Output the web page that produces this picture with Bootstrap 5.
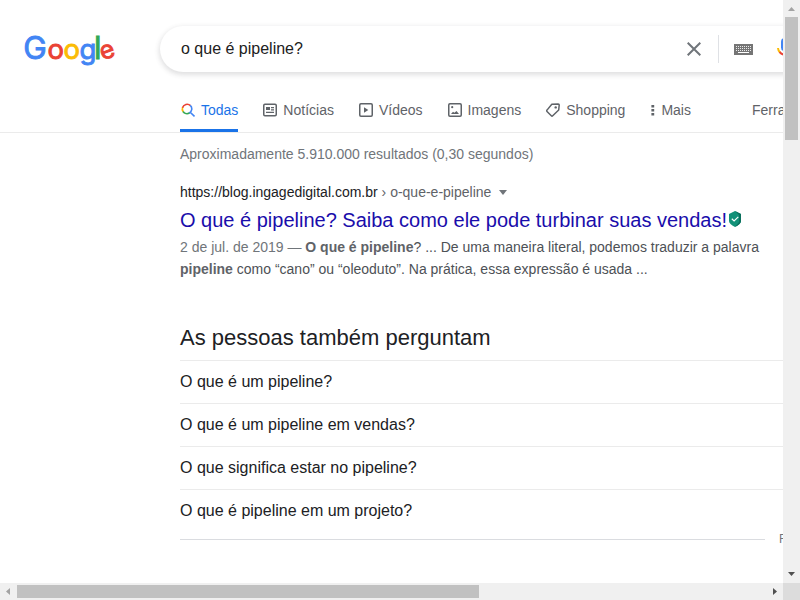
<!DOCTYPE html>
<html lang="pt-BR">
<head>
<meta charset="utf-8">
<meta name="viewport" content="width=device-width, initial-scale=1">
<title>o que é pipeline? - Pesquisa Google</title>
<link href="https://cdn.jsdelivr.net/npm/bootstrap@5.3.0/dist/css/bootstrap.min.css" rel="stylesheet">
<style>
body{font-family:"Liberation Sans",Arial,sans-serif;font-size:14px;line-height:22px;color:#202124;background:#fff}
svg{display:block;flex-shrink:0}
a{text-decoration:none}
.window{display:grid;grid-template:583px 17px / 783px 17px;width:800px;height:600px}
.page{width:783px;height:583px}
.site-header{height:133px;border-bottom:1px solid #ebebeb}
.search-row{height:98px;padding-top:26px}
.logo-link{width:160px;padding-left:24px;padding-top:9px}
.logo-link svg{overflow:visible}
.search-box{width:690px;height:46px;border-radius:24px 0 0 24px;box-shadow:0 2px 5px 1px rgba(64,60,67,.16);padding-left:21px}
.query{width:506px;font-size:16px;line-height:24px;color:#212121}
.divider{width:1px;height:28px;background:#dfe1e5;margin:0 15px 0 17px}
.tabs{height:34px;padding-left:180px}
.tabs .nav-link{height:34px;padding:0 0 10px;color:#5f6368;font-size:14px;line-height:24px;gap:6px;border-radius:0}
.tabs .nav-link.active{color:#1a73e8;border-bottom:3px solid #1a73e8;padding-bottom:7px}
.results{padding-left:180px}
.stats{color:#70757a;padding-top:10px;line-height:22px}
.cite{padding-top:16px;line-height:22px}
.cite .path-part{color:#5f6368}
.result-title{font-size:20px;line-height:26px;color:#1a0dab;padding-top:4px}
.snippet{color:#4d5156;padding-top:3px;width:590px}
.snippet b{color:#5f6368}
.ask-title{font-size:22px;line-height:28px;margin:0;padding-top:44px;font-weight:400}
.questions{margin-top:8px}
.questions .list-group-item{height:43px;border:0;border-top:1px solid #ebebeb;padding:0;font-size:16px;line-height:41px;color:#202124}
.feedback{height:15px}
.feedback-line{width:585px;height:1px;background:#dadce0}
.feedback-text{font-size:12px;line-height:13px;color:#70757a;margin-left:14px}
.bar{background:#f0f0f0}
.thumb{background:#c1c1c1}
.bar-v .thumb{width:13px;height:123px}
.bar-h .thumb{width:462px;height:13px}
.corner{background:#dcdcdc}
</style>
<script src="https://cdn.jsdelivr.net/npm/bootstrap@5.3.0/dist/js/bootstrap.bundle.min.js"></script>
</head>
<body class="overflow-hidden">
<div class="window">
  <div class="page overflow-hidden">
    <header class="site-header">
      <div class="search-row d-flex align-items-start">
        <a class="logo-link flex-shrink-0" href="#" aria-label="Google">
          <svg width="94" height="34" viewBox="0 0 94 34" font-family="Inter,sans-serif" font-size="27.5" stroke-width=".9">
            <text y="23.500" x="-.8" font-size="31.500" fill="#4285f4" stroke="#4285f4">G</text>
            <text y="23.500" x="23.500" fill="#ea4335" stroke="#ea4335">o</text>
            <text y="23.500" x="39.600" fill="#fbbc05" stroke="#fbbc05">o</text>
            <text y="23.500" x="55.500" fill="#4285f4" stroke="#4285f4">g</text>
            <text y="24" x="70" font-size="31" fill="#34a853" stroke="#34a853">l</text>
            <text transform="translate(78.800 25.500) rotate(-20)" font-size="25" fill="#ea4335" stroke="#ea4335">e</text>
          </svg>
        </a>
        <div class="search-box d-flex align-items-center flex-shrink-0">
          <div class="query flex-shrink-0">o que é pipeline?</div>
          <svg width="14" height="14" viewBox="0 0 14 14" fill="none" stroke="#70757a" stroke-width="2"><path d="M.7.7l12.6 12.6M13.3.7L.7 13.3"/></svg>
          <span class="divider flex-shrink-0"></span>
          <svg width="19" height="11" viewBox="0 0 19 11" shape-rendering="crispEdges"><path fill="#757575" d="M0 0h19v11H0z"/><path stroke="#fff" stroke-opacity=".85" stroke-dasharray="1 1" d="M2 2.500h15M2 4.500h15M2 6.500h15"/><path stroke="#fff" d="M4 8.500h11"/></svg>
          <svg class="ms-4" width="18" height="22" viewBox="0 0 18 22"><rect x="4" y="0" width="7" height="13" rx="3.500" fill="#4285f4"/><path d="M1 10a7 7 0 0 0 2 4.500" fill="none" stroke="#fbbc05" stroke-width="2"/><path d="M2.600 14a7 7 0 0 0 12.400-4" fill="none" stroke="#ea4335" stroke-width="2"/><path d="M6 17h2v3H6z" fill="#34a853"/></svg>
        </div>
      </div>
      <nav class="tabs nav flex-nowrap">
        <a class="nav-link active d-flex align-items-center" href="#"><svg width="15" height="15" viewBox="-1 0 15 15" fill="none" stroke-width="1.600"><path d="M2.200 8.700A4.800 4.800 0 0 1 1.700 4" stroke="#fbbc05"/><path d="M1.500 4.800A4.800 4.800 0 0 1 9.500 2.600" stroke="#ea4335"/><path d="M9.200 2.300A4.800 4.800 0 0 1 8 10.200M9.200 9.200l4.300 4.300" stroke="#4285f4"/><path d="M8.400 10A4.800 4.800 0 0 1 2 8.500" stroke="#34a853"/></svg>Todas</a>
        <a class="nav-link d-flex align-items-center" style="margin-left:25px" href="#"><svg width="14" height="14" viewBox="0 0 14 14" fill="#5f6368"><rect x=".75" y="1.250" width="12.500" height="11.500" rx="1.200" fill="none" stroke="#5f6368" stroke-width="1.500"/><path d="M3 4h4v3H3zM8 4h3v1.200H8zM8 6.200h3v1.200H8zM3 8.800h8V10H3z"/></svg>Notícias</a>
        <a class="nav-link d-flex align-items-center" style="margin-left:25px" href="#"><svg width="14" height="14" viewBox="0 0 14 14" fill="#5f6368"><rect x=".75" y=".75" width="12.500" height="12.500" rx="1.200" fill="none" stroke="#5f6368" stroke-width="1.500"/><path d="M5 4.300L9.300 7 5 9.700z"/></svg>Vídeos</a>
        <a class="nav-link d-flex align-items-center" style="margin-left:25px" href="#"><svg width="14" height="14" viewBox="0 0 14 14" fill="#5f6368"><rect x=".75" y=".75" width="12.500" height="12.500" rx="1.200" fill="none" stroke="#5f6368" stroke-width="1.500"/><path d="M3 11l2-2.300 1.400 1L8.500 8l2.500 3z"/><circle cx="4.200" cy="4.200" r="1.100"/></svg>Imagens</a>
        <a class="nav-link d-flex align-items-center" style="margin-left:25px" href="#"><svg width="14" height="14" viewBox="0 0 14 14" fill="none" stroke="#5f6368" stroke-width="1.500" stroke-linejoin="round"><path d="M5.800 1.200l6.400-.2q1 0 1 1l-.5 5-6 5.800q-.7.7-1.400 0L1 8.500q-.7-.7 0-1.400z"/><circle cx="9.700" cy="4.400" r="1.200" fill="#5f6368" stroke="none"/></svg>Shopping</a>
        <a class="nav-link d-flex align-items-center" style="margin-left:25px" href="#"><svg width="5" height="14" viewBox="0 0 5 14" fill="#5f6368"><path d="M1.400 2h2.800v2.600H1.400zM1.400 6h2.800v2.600H1.400zM1.400 10h2.800v2.600H1.400z"/></svg>Mais</a>
        <a class="nav-link d-flex align-items-center flex-shrink-0" style="margin-left:61px" href="#">Ferramentas</a>
      </nav>
    </header>
    <main class="results">
      <div class="stats">Aproximadamente 5.910.000 resultados (0,30 segundos)</div>
      <div class="cite d-flex align-items-center">https://blog.ingagedigital.com.br<span class="path-part">&nbsp;› o-que-e-pipeline</span><svg class="ms-2" width="8" height="5" viewBox="0 0 8 5"><path fill="#70757a" d="M0 0h8L4 5z"/></svg></div>
      <div class="result-title d-flex text-nowrap"><a href="#" class="text-reset">O que é pipeline? Saiba como ele pode turbinar suas vendas!</a><svg style="margin:4px 0 0 2px" width="12" height="16" viewBox="0 0 12 16"><path fill="#129178" d="M6 0l6 3v7q0 3-6 6-6-3-6-6V3z"/><path fill="#0b705d" d="M6 0l6 3v7q0 3-6 6l4-5V4z"/><path d="M2.800 7.700l2.300 2.200 4.200-4" fill="none" stroke="#fff" stroke-width="1.200"/></svg></div>
      <div class="snippet"><span style="color:#70757a">2 de jul. de 2019 — </span><b>O que é pipeline</b>? ... De uma maneira literal, podemos traduzir a palavra<br><b>pipeline</b> como “cano” ou “oleoduto”. Na prática, essa expressão é usada ...</div>
      <h2 class="ask-title">As pessoas também perguntam</h2>
      <div class="questions list-group list-group-flush">
        <a class="list-group-item" href="#">O que é um pipeline?</a>
        <a class="list-group-item" href="#">O que é um pipeline em vendas?</a>
        <a class="list-group-item" href="#">O que significa estar no pipeline?</a>
        <a class="list-group-item" href="#">O que é pipeline em um projeto?</a>
      </div>
      <div class="feedback d-flex align-items-center"><span class="feedback-line flex-shrink-0"></span><span class="feedback-text">Feedback</span></div>
    </main>
  </div>
  <div class="bar bar-v d-flex flex-column align-items-center justify-content-between">
    <div class="d-flex flex-column align-items-center"><svg width="17" height="17"><path fill="#a3a3a3" d="M5 11h7L8.500 7z"/></svg><div class="thumb"></div></div>
    <svg width="17" height="17"><path fill="#505050" d="M5 6h7L8.500 10z"/></svg>
  </div>
  <div class="bar bar-h d-flex align-items-center justify-content-between">
    <div class="d-flex align-items-center"><svg width="17" height="17"><path fill="#a3a3a3" d="M10 5v7L6 8.500z"/></svg><div class="thumb"></div></div>
    <svg width="17" height="17"><path fill="#505050" d="M7 5v7l4-3.500z"/></svg>
  </div>
  <div class="corner"></div>
</div>
</body>
</html>
